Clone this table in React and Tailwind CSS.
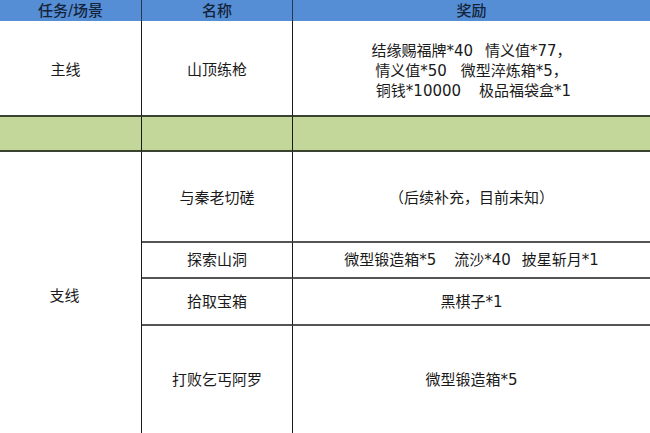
import React from "react";

const font = { fontFamily: '"DejaVu Sans", "Noto Sans CJK SC", sans-serif' };

function Gap({ w }) {
  return <span className={`inline-block ${w}`} />;
}

export default function App() {
  const cellBase = "flex items-center justify-center text-center";
  return (
    <div
      className="w-[650px] h-[433px] bg-white text-[15px] leading-[20px] text-[#1a1a1a] overflow-hidden"
      style={font}
    >
      <div className="grid grid-cols-[142px_151px_1fr] grid-rows-[21px_96px_35px_91px_36px_47px_107px] h-[433px]">
        {/* header */}
        <div className={`${cellBase} bg-[#558ed5] border-r border-[#2a3550] text-[#14233a] font-medium`}>任务/场景</div>
        <div className={`${cellBase} bg-[#558ed5] border-r border-[#2a3550] text-[#14233a] font-medium`}>名称</div>
        <div className={`${cellBase} bg-[#558ed5] text-[#14233a] font-medium`}>奖励</div>

        {/* main */}
        <div className={`${cellBase} border-r border-r-[#1a1a1a] border-b-2 border-b-[#3a4230] pr-[10px] pt-[4px]`}>主线</div>
        <div className={`${cellBase} border-r border-r-[#1a1a1a] border-b-2 border-b-[#3a4230] pt-[4px]`}>山顶练枪</div>
        <div className={`${cellBase} border-b-2 border-b-[#3a4230] pt-[6px]`}>
          <div className="leading-[20px] whitespace-nowrap">
            <div>结缘赐福牌*40<Gap w="w-[12px]" />情义值*77，</div>
            <div>情义值*50<Gap w="w-[14px]" />微型淬炼箱*5，</div>
            <div className="pl-[4px]">铜钱*10000<Gap w="w-[18px]" />极品福袋盒*1</div>
          </div>
        </div>

        {/* green */}
        <div className="bg-[#c4d79b] border-r border-r-[#1a1a1a] border-b-2 border-b-[#3a4230]"></div>
        <div className="bg-[#c4d79b] border-r border-r-[#1a1a1a] border-b-2 border-b-[#3a4230]"></div>
        <div className="bg-[#c4d79b] border-b-2 border-b-[#3a4230]"></div>

        {/* side quests */}
        <div className={`${cellBase} row-span-4 border-r border-r-[#1a1a1a] pr-[12px] pt-[6px]`}>支线</div>
        <div className={`${cellBase} border-r border-r-[#1a1a1a] border-b-2 border-b-[#555] pt-[2px]`}>与秦老切磋</div>
        <div className={`${cellBase} border-b-2 border-b-[#555] pt-[2px]`}>（后续补充，目前未知）</div>

        <div className={`${cellBase} border-r border-r-[#1a1a1a] border-b-2 border-b-[#555]`}>探索山洞</div>
        <div className={`${cellBase} border-b-2 border-b-[#555] whitespace-nowrap`}>微型锻造箱*5<Gap w="w-[18px]" />流沙*40<Gap w="w-[11px]" />披星斩月*1</div>

        <div className={`${cellBase} border-r border-r-[#1a1a1a] border-b-2 border-b-[#555]`}>拾取宝箱</div>
        <div className={`${cellBase} border-b-2 border-b-[#555]`}>黑棋子*1</div>

        <div className={`${cellBase} border-r border-r-[#1a1a1a]`}>打败乞丐阿罗</div>
        <div className={`${cellBase}`}>微型锻造箱*5</div>
      </div>
    </div>
  );
}
